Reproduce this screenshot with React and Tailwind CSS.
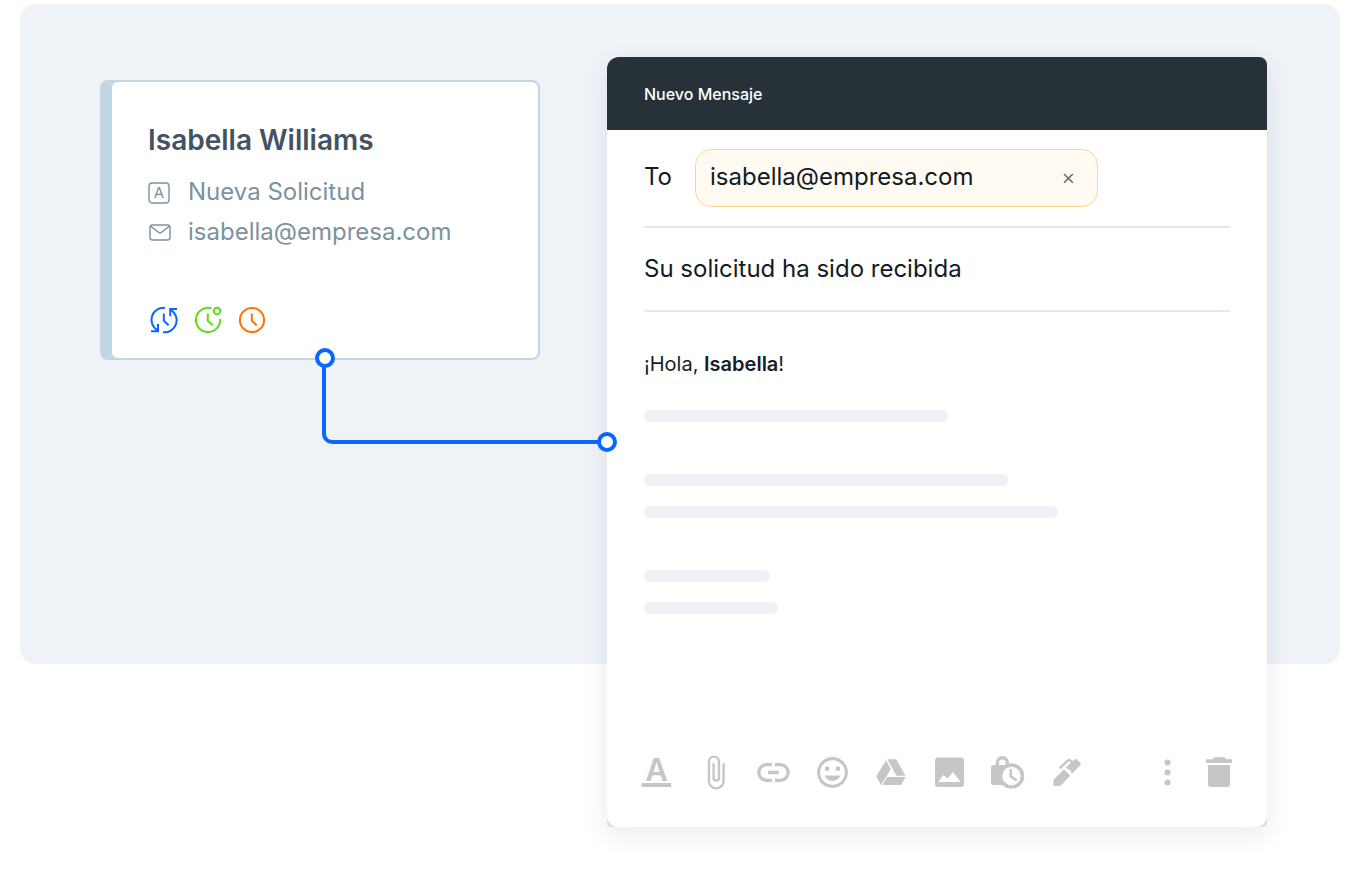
import React, { useState } from 'react';
import { MdAttachFile, MdInsertEmoticon } from 'react-icons/md';

const NameBoxIcon = () => (
  <svg viewBox="0 0 26 26" className="size-[26px] shrink-0 overflow-visible" fill="none" stroke="currentColor" strokeWidth="1.4">
    <rect x="1" y="4" width="20" height="20" rx="3.2" />
    <text x="11" y="19.4" textAnchor="middle" fontSize="15" fontWeight="400" fill="currentColor" stroke="none">A</text>
  </svg>
);

const MailIcon = () => (
  <svg viewBox="0 0 26 26" className="size-[26px] shrink-0" fill="none" stroke="currentColor" strokeWidth="1.4" strokeLinejoin="round">
    <rect x="2" y="6" width="20" height="15" rx="2.4" />
    <path d="M2.8 7.2 11 13.6q1 .7 2 0L21.2 7.2" />
  </svg>
);

const SyncClockIcon = () => (
  <svg viewBox="0 0 32 32" className="size-8 text-[#0b66ff]" fill="none" stroke="currentColor" strokeWidth="2">
    <path d="M17 3.9A12.1 12.1 0 0 0 9.5 26.4" />
    <path d="M15 28.2A12.1 12.1 0 0 0 22.8 5.8" />
    <path d="M3 27.2h7V20M29 5h-6.8v7.2" />
    <path d="M15.8 9.4v7.2l4.8 4.6" />
  </svg>
);

const StatusClockIcon = () => (
  <svg viewBox="0 0 32 32" className="size-8 text-[#5fdc17]" fill="none" stroke="currentColor" strokeWidth="2">
    <path d="M19.6 4.4A12.1 12.1 0 1 0 28.1 15" />
    <circle cx="25" cy="7" r="3.2" />
    <path d="M15.8 9.4v7.2l4.8 4.6" />
  </svg>
);

const ClockIcon = () => (
  <svg viewBox="0 0 32 32" className="size-8 text-[#ff7300]" fill="none" stroke="currentColor" strokeWidth="2">
    <circle cx="16" cy="16" r="12.1" />
    <path d="M15.8 9.4v7.2l4.8 4.6" />
  </svg>
);

const FormatIcon = () => (
  <svg viewBox="0 0 37 37" className="size-full overflow-visible" fill="currentColor">
    <text x="18.5" y="26.5" textAnchor="middle" fontSize="31" fontWeight="600">A</text>
    <rect x="3.7" y="29" width="29.4" height="4" />
  </svg>
);

const LinkIcon = () => (
  <svg viewBox="0 0 37 37" className="size-full" fill="none" stroke="currentColor" strokeWidth="3.3">
    <path d="M16.8 10.7h-5.2a7.8 7.8 0 0 0 0 15.6h5.2M20 10.7h5.4a7.8 7.8 0 0 1 0 15.6H20M13 18.5h10.8" />
  </svg>
);

const DriveIcon = () => (
  <svg viewBox="0 0 37 37" className="size-full" fill="currentColor">
    <path d="M14 6.4 18.8 15 9 31 4.2 22.2z" />
    <path d="M15.3 5.3h8.9l9.2 16.4h-9z" />
    <path d="M15 23h18.5L29 31H10.3z" />
  </svg>
);

const PhotoIcon = () => (
  <svg viewBox="0 0 37 37" className="size-full" fill="currentColor" fillRule="evenodd">
    <path d="M7 3.4h23a3 3 0 0 1 3 3V30a3 3 0 0 1-3 3H7a3 3 0 0 1-3-3V6.4a3 3 0 0 1 3-3zM7.3 28h22.4l-7.8-10-5.4 6.7-4-4z" />
  </svg>
);

const LockClockIcon = () => (
  <svg viewBox="0 0 37 37" className="size-full" fill="none" stroke="currentColor">
    <rect x="2" y="11" width="20" height="20" rx="2.5" fill="currentColor" stroke="none" />
    <path d="M8.3 12V8.8a5 5 0 0 1 10 0V12" strokeWidth="3.4" />
    <circle cx="22.5" cy="22" r="11" fill="#fff" strokeWidth="3.6" />
    <path d="M21.8 15v7.6l6 3.7" strokeWidth="2.6" />
  </svg>
);

const PenIcon = () => (
  <svg viewBox="0 0 37 37" className="size-full" fill="currentColor">
    <path d="M5.5 32v-6.3L16 15.3l6.3 6.4L12.2 32z" />
    <path d="m17.4 13.8 9.4-8.6q1-.8 2 .2l3.6 3.6q1 1 .1 2l-9 9.2q.4-2.2-1.300-4z" />
    <path d="m11.6 14.4 8.2-7.8q1.2-1.1 2.4 0l2.6 2.2" fill="none" stroke="currentColor" strokeWidth="2.6" />
  </svg>
);

const MoreIcon = () => (
  <svg viewBox="0 0 37 37" className="size-full" fill="currentColor">
    <circle cx="18.5" cy="8.4" r="3" />
    <circle cx="18.5" cy="18.4" r="3" />
    <circle cx="18.5" cy="28.4" r="3" />
  </svg>
);

const TrashIcon = () => (
  <svg viewBox="0 0 37 37" className="size-full" fill="currentColor">
    <path d="M6 5.3h6.5l1.5-2h10.6l1.5 2H32V9H6z" />
    <path d="M8 11h22v19a3 3 0 0 1-3 3H11a3 3 0 0 1-3-3z" />
  </svg>
);

const formatTools = [
  { label: 'Formato', icon: <FormatIcon /> },
  { label: 'Adjuntar archivo', icon: <MdAttachFile className="size-full" /> },
  { label: 'Insertar enlace', icon: <LinkIcon /> },
  { label: 'Insertar emoji', icon: <MdInsertEmoticon className="size-full" /> },
  { label: 'Drive', icon: <DriveIcon /> },
  { label: 'Insertar foto', icon: <PhotoIcon /> },
  { label: 'Modo confidencial', icon: <LockClockIcon /> },
  { label: 'Firma', icon: <PenIcon /> },
];

const messageTools = [
  { label: 'Más opciones', icon: <MoreIcon /> },
  { label: 'Descartar', icon: <TrashIcon /> },
];

const ToolButton = ({ label, icon }) => (
  <button type="button" aria-label={label} className="size-[37px] shrink-0 text-[#c5c6c8] hover:text-gray-500">
    {icon}
  </button>
);

const ContactCard = () => (
  <article className="rounded-lg border-2 border-l-12 border-[#c2d5e4] bg-[#c2d5e4]">
    <div className="rounded-md bg-white px-9 pt-10 pb-[22px]">
      <h2 className="text-[28px] leading-9 font-semibold text-[#425263]">Isabella Williams</h2>
      <div className="mt-[14px] text-2xl leading-10 text-[#7c929e]">
        <p className="flex items-center gap-[14px]">
          <NameBoxIcon /> Nueva Solicitud
        </p>
        <p className="flex items-center gap-[14px]">
          <MailIcon /> isabella@empresa.com
        </p>
      </div>
      <div className="mt-[52px] flex gap-3">
        <SyncClockIcon />
        <StatusClockIcon />
        <ClockIcon />
      </div>
    </div>
  </article>
);

/* Line that goes from the card to the message */
const Connector = () => (
  <>
    <div className="absolute top-[278px] -right-[67px] left-[222px] z-10 h-[86px] rounded-bl-[10px] border-b-4 border-l-4 border-[#0b66ff]" />
    <div className="absolute top-[268px] left-[215px] z-10 size-5 rounded-full border-4 border-[#0b66ff] bg-white" />
    <div className="absolute top-[352px] -right-[77px] z-10 size-5 rounded-full border-4 border-[#0b66ff] bg-white" />
  </>
);

const ComposeWindow = () => {
  const [to, setTo] = useState('isabella@empresa.com');
  const [subject, setSubject] = useState('Su solicitud ha sido recibida');

  return (
    <section className="-mb-[163px] rounded-tl-xl rounded-tr-lg rounded-b bg-[#dfe1e5] shadow-[0_8px_24px_rgba(40,60,90,0.1)]">
      <header className="flex h-[73px] items-center rounded-tl-xl rounded-tr-lg bg-[#273238] px-[37px]">
        <h2 className="text-base font-medium text-white">Nuevo Mensaje</h2>
      </header>

      <div className="rounded-b-xl bg-white">
        <div className="px-[37px] text-2xl text-[#111b24]">
          <div className="flex items-center border-b-2 border-[#e1e6f1] py-[19px]">
            <label htmlFor="to" className="w-[51px] shrink-0 pb-[3px]">To</label>
            <div className="flex h-[58px] w-[403px] items-center rounded-2xl border border-[#ffd78a] bg-[#fffaf2] pr-[17px] pl-[14px]">
              <input
                id="to" type="email" value={to} onChange={(e) => setTo(e.target.value)}
                className="min-w-0 flex-1 bg-transparent pb-[3px] focus:outline-none"
              />
              <button type="button" aria-label="Quitar" onClick={() => setTo('')} className="size-6 text-[#51666f]">
                <svg viewBox="0 0 24 24" className="size-6" stroke="currentColor" strokeWidth="1.4">
                  <path d="m8 8 8.8 8.8M16.8 8 8 16.8" />
                </svg>
              </button>
            </div>
          </div>
          <input
            type="text" aria-label="Asunto" value={subject} onChange={(e) => setSubject(e.target.value)}
            className="block h-[84px] w-full border-b-2 border-[#e1e9f2] bg-transparent pb-px focus:outline-none"
          />
        </div>

        <div className="px-[37px] pt-[38px]">
          <p className="text-xl leading-7 text-[#161e28]">
            ¡Hola, <strong className="font-semibold">Isabella</strong>!
          </p>
          <div className="mt-8 h-3 w-[304px] rounded-full bg-[#f0f0f5]" />
          <div className="mt-13 h-3 w-[364px] rounded-full bg-[#f0f0f5]" />
          <div className="mt-5 h-3 w-[414px] rounded-full bg-[#f0f0f5]" />
          <div className="mt-13 h-3 w-[126px] rounded-full bg-[#f0f0f5]" />
          <div className="mt-5 h-3 w-[134px] rounded-full bg-[#f0f0f5]" />
        </div>

        <div className="flex justify-between gap-4 pt-[140px] pr-[30px] pb-9 pl-[31px]">
          <div className="flex max-w-[447px] flex-1 justify-between">
            {formatTools.map((tool) => (
              <ToolButton key={tool.label} {...tool} />
            ))}
          </div>
          <div className="flex gap-[14px]">
            {messageTools.map((tool) => (
              <ToolButton key={tool.label} {...tool} />
            ))}
          </div>
        </div>
      </div>
    </section>
  );
};

const App = () => {
  return (
    <main className="min-h-screen bg-white px-5 pt-1 font-['Inter',sans-serif]">
      <div className="grid grid-cols-[2fr_3fr] items-start gap-[67px] rounded-2xl bg-[#eff3f8] pt-[53px] pr-[73px] pl-20">
        <div className="relative mt-[23px]">
          <ContactCard />
          <Connector />
        </div>
        <ComposeWindow />
      </div>
    </main>
  );
};

export default App;
